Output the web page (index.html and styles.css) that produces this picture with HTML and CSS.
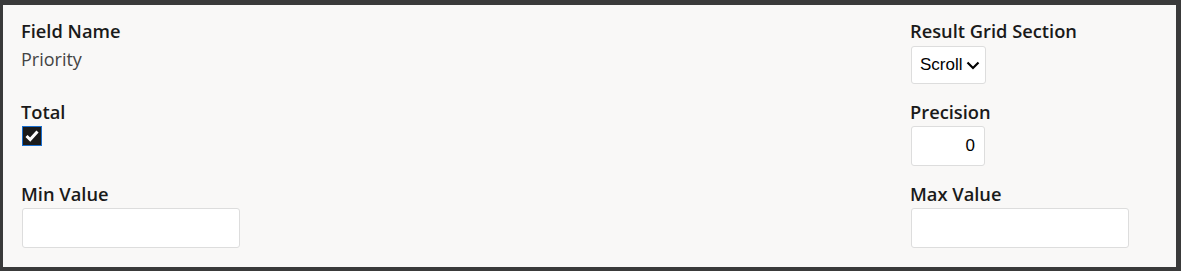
FILE: index.html
```html
<!DOCTYPE html>
<html lang="en">
<head>
<meta charset="utf-8">
<title>Field Settings</title>
<link rel="stylesheet" href="styles.css">
</head>
<body>
<div class="panel">
  <div class="grid">
    <div class="field">
      <div class="label">Field Name</div>
      <div class="value">Priority</div>
    </div>
    <div class="field">
      <div class="label">Result Grid Section</div>
      <div class="select">
        <span class="select-text">Scroll</span>
        <svg class="chev" width="14" height="9" viewBox="0 0 14 9"><path d="M1.5 1.5 L7 7 L12.5 1.5" fill="none" stroke="#000" stroke-width="2.2"/></svg>
      </div>
    </div>
    <div class="field">
      <div class="label">Total</div>
      <div class="check">
        <svg width="14" height="12" viewBox="0 0 14 12"><path d="M1.5 6 L5.2 9.6 L12.5 1.6" fill="none" stroke="#fff" stroke-width="3"/></svg>
      </div>
    </div>
    <div class="field">
      <div class="label">Precision</div>
      <div class="input small">0</div>
    </div>
    <div class="field">
      <div class="label">Min Value</div>
      <div class="input wide"></div>
    </div>
    <div class="field">
      <div class="label">Max Value</div>
      <div class="input wide"></div>
    </div>
  </div>
</div>
</body>
</html>
```
FILE: styles.css
```css
html, body {
  margin: 0;
  padding: 0;
}
body {
  background: #3a3a3a;
  width: 1181px;
  height: 271px;
  padding: 5px 5px 4px 3px;
  box-sizing: border-box;
}
.panel {
  background: #f9f8f7;
  height: 262px;
  padding: 14px 0 0 18px;
  box-sizing: border-box;
  font-family: "Segoe UI", "Open Sans", sans-serif;
}
.grid {
  display: grid;
  grid-template-columns: 889px auto;
  row-gap: 16px;
  align-items: start;
}
.label {
  font-size: 18.3px;
  line-height: 24px;
  font-weight: 600;
  color: #1a1a1a;
}
.value {
  margin-top: 4px;
  font-size: 18px;
  line-height: 24px;
  color: #444;
}
.select {
  margin-top: 3px;
  margin-left: 1px;
  width: 75px;
  height: 38px;
  box-sizing: border-box;
  border: 1px solid #ddd;
  border-radius: 3px;
  background: #fff;
  display: flex;
  align-items: center;
  padding-left: 8px;
  gap: 3px;
  font-family: "Liberation Sans", Arial, sans-serif;
  font-size: 17px;
  color: #000;
}
.chev {
  display: block;
}
.check {
  margin-top: 2px;
  margin-left: 1px;
  width: 20px;
  height: 20px;
  box-sizing: border-box;
  background: #1b1b1b;
  border: 1.5px solid #1a6fd0;
  display: flex;
  align-items: center;
  justify-content: center;
}
.check svg {
  display: block;
}
.input {
  margin-top: 2px;
  margin-left: 1px;
  height: 40px;
  box-sizing: border-box;
  border: 1px solid #ddd;
  border-radius: 3px;
  background: #fff;
  font-family: "Liberation Sans", Arial, sans-serif;
  font-size: 17px;
  color: #000;
}
.input.small {
  width: 74px;
  display: flex;
  align-items: center;
  justify-content: flex-end;
  padding-right: 9px;
}
.input.wide {
  width: 218px;
}
```
